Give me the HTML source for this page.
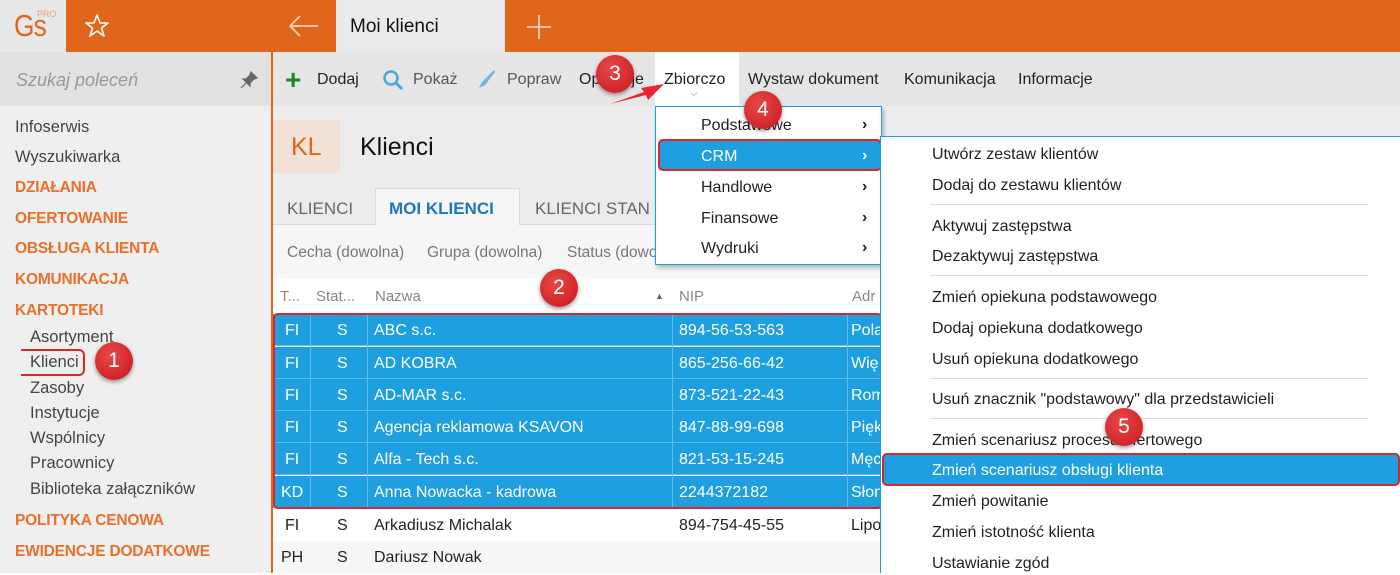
<!DOCTYPE html>
<html><head><meta charset="utf-8"><style>
*{margin:0;padding:0;box-sizing:border-box}
body{width:1400px;height:573px;overflow:hidden;position:relative;background:#fff;font-family:"Liberation Sans",sans-serif;color:#222}
.a{position:absolute;white-space:nowrap}
.side{font-size:16.5px;color:#444}
.cat{font-size:15.5px;color:#e8702a;font-weight:bold;letter-spacing:-0.2px}
.row{position:absolute;left:273px;width:608px;height:32px;font-size:16px;line-height:34px}
.sel{background:#1e9fdf;color:#fff;border-bottom:1px solid #5fbde9}
.row span{position:absolute}
.badge{position:absolute;width:38px;height:38px;border-radius:50%;background:radial-gradient(circle at 40% 35%,#e84848,#c8161c);color:#fff;font-size:21px;text-align:center;line-height:38px;box-shadow:0 2px 4px rgba(0,0,0,.4)}
.mi{position:absolute;left:932px;font-size:16px;color:#222}
.sep{position:absolute;left:930px;width:438px;height:1px;background:#ddd}
.dm{position:absolute;left:701px;font-size:16px;color:#222}
.chev{position:absolute;left:862px;font-size:16px;font-weight:bold}
</style></head><body>
<div class="a" style="left:0;top:0;width:1400px;height:52px;background:#e0661b"></div>
<div class="a" style="left:0;top:0;width:66px;height:52px;background:#e8e8e8"></div>
<div class="a" style="left:14px;top:8px;font-size:31px;color:#e0661b;letter-spacing:-1px;transform:scaleX(.85);transform-origin:left">Gs</div>
<div class="a" style="left:37px;top:9px;font-size:9px;color:#e8a37a">PRO</div>
<svg class="a" style="left:84px;top:13px" width="26" height="26" viewBox="0 0 26 26"><path d="M13 2 L16 10 L24 10 L17.5 15 L20 23 L13 18 L6 23 L8.5 15 L2 10 L10 10 Z" fill="none" stroke="#fff" stroke-width="1.6" stroke-linejoin="round"/></svg>
<svg class="a" style="left:288px;top:14px" width="32" height="24"><path d="M2 12 H30 M2 12 L12 2 M2 12 L12 22" stroke="#f6d2b8" stroke-width="1.8" fill="none"/></svg>
<div class="a" style="left:336px;top:0;width:169px;height:52px;background:#ebebeb"></div>
<div class="a" style="left:350px;top:16px;font-size:19px;color:#111">Moi klienci</div>
<svg class="a" style="left:526px;top:14px" width="26" height="26"><path d="M13 1 V25 M1 13 H25" stroke="#f6d2b8" stroke-width="1.8"/></svg>
<div class="a" style="left:0;top:52px;width:271px;height:521px;background:#efefef"></div>
<div class="a" style="left:0;top:52px;width:271px;height:54px;background:#e2e2e2"></div>
<div class="a" style="left:16px;top:70px;font-size:18px;color:#999;font-style:italic">Szukaj poleceń</div>
<svg class="a" style="left:240px;top:71px" width="18" height="18"><path d="M11 1 L17 7 L14 8 L10 12 L10 15 L3 8 L6 8 L10 4 Z M6 12 L1 17" fill="#666" stroke="#666" stroke-width="1.2"/></svg>
<div class="a" style="left:271px;top:52px;width:2px;height:521px;background:#e0661b"></div>
<div class="a side" style="left:15px;top:118px">Infoserwis</div>
<div class="a side" style="left:15px;top:148px">Wyszukiwarka</div>
<div class="a cat" style="left:15px;top:179px">DZIAŁANIA</div>
<div class="a cat" style="left:15px;top:210px">OFERTOWANIE</div>
<div class="a cat" style="left:15px;top:240px">OBSŁUGA KLIENTA</div>
<div class="a cat" style="left:15px;top:271px">KOMUNIKACJA</div>
<div class="a cat" style="left:15px;top:302px">KARTOTEKI</div>
<div class="a side" style="left:30px;top:328px">Asortyment</div>
<div class="a side" style="left:30px;top:353px">Klienci</div>
<div class="a" style="left:21px;top:349px;width:64px;height:27px;border:2px solid #d8262c;border-left:none;border-radius:0 6px 6px 0"></div>
<div class="a side" style="left:30px;top:379px">Zasoby</div>
<div class="a side" style="left:30px;top:404px">Instytucje</div>
<div class="a side" style="left:30px;top:429px">Wspólnicy</div>
<div class="a side" style="left:30px;top:454px">Pracownicy</div>
<div class="a side" style="left:30px;top:480px">Biblioteka załączników</div>
<div class="a cat" style="left:15px;top:512px">POLITYKA CENOWA</div>
<div class="a cat" style="left:15px;top:543px">EWIDENCJE DODATKOWE</div>
<div class="a" style="left:273px;top:52px;width:1127px;height:54px;background:#e6e6e6"></div>
<div class="a" style="left:655px;top:52px;width:84px;height:54px;background:#fff"></div>
<div class="a" style="left:285px;top:67px;font-size:28px;color:#1b8a1b;font-weight:bold;line-height:26px">+</div>
<div class="a" style="left:317px;top:71px;font-size:16px">Dodaj</div>
<svg class="a" style="left:382px;top:69px" width="22" height="22"><circle cx="9" cy="9" r="6.5" stroke="#4aa8dc" stroke-width="2.5" fill="none"/><path d="M14 14 L20 20" stroke="#4aa8dc" stroke-width="3"/></svg>
<div class="a" style="left:413px;top:71px;font-size:16px;color:#555">Pokaż</div>
<svg class="a" style="left:474px;top:68px" width="22" height="22"><path d="M20 2 L8 14 L5 20 L11 17 L21 4 Z" fill="#6db6e0"/></svg>
<div class="a" style="left:507px;top:71px;font-size:16px;color:#555">Popraw</div>
<div class="a" style="left:579px;top:71px;font-size:16px">Operacje</div>
<div class="a" style="left:664px;top:71px;font-size:16px">Zbiorczo</div>
<div class="a" style="left:690px;top:88px;font-size:10px;color:#888">⌵</div>
<div class="a" style="left:748px;top:71px;font-size:16px">Wystaw dokument</div>
<div class="a" style="left:904px;top:71px;font-size:16px">Komunikacja</div>
<div class="a" style="left:1018px;top:71px;font-size:16px">Informacje</div>
<svg class="a" style="left:608px;top:80px" width="60" height="28"><path d="M2 24 L36 12 L33 8 L56 4 L40 20 L38 15 Z" fill="#e8262c"/></svg>
<div class="a" style="left:273px;top:106px;width:1127px;height:172px;background:#ececec"></div>
<div class="a" style="left:273px;top:120px;width:67px;height:53px;background:#f2e1d6"></div>
<div class="a" style="left:291px;top:133px;font-size:25px;color:#e0661b">KL</div>
<div class="a" style="left:360px;top:133px;font-size:25px;color:#111">Klienci</div>
<div class="a" style="left:273px;top:224px;width:608px;height:1px;background:#d8d8d8"></div>
<div class="a" style="left:375px;top:188px;width:145px;height:38px;background:#f6f6f6;border:1px solid #d8d8d8;border-bottom:none"></div>
<div class="a" style="left:287px;top:199px;font-size:17px;color:#666">KLIENCI</div>
<div class="a" style="left:389px;top:199px;font-size:17px;color:#1a7ab8;font-weight:bold">MOI KLIENCI</div>
<div class="a" style="left:535px;top:199px;font-size:17px;color:#666">KLIENCI STAN</div>
<div class="a" style="left:273px;top:225px;width:608px;height:53px;background:#f6f6f6"></div>
<div class="a" style="left:287px;top:244px;font-size:15.5px;color:#777">Cecha (dowolna)</div>
<div class="a" style="left:427px;top:244px;font-size:15.5px;color:#777">Grupa (dowolna)</div>
<div class="a" style="left:567px;top:244px;font-size:15.5px;color:#777">Status (dowo</div>
<div class="a" style="left:273px;top:280px;width:608px;height:32px;background:#fff"></div>
<div class="a" style="left:280px;top:288px;font-size:15px;color:#888">T...</div>
<div class="a" style="left:316px;top:288px;font-size:15px;color:#888">Stat...</div>
<div class="a" style="left:375px;top:288px;font-size:15px;color:#888">Nazwa</div>
<div class="a" style="left:655px;top:291px;font-size:9px;color:#666">▲</div>
<div class="a" style="left:679px;top:288px;font-size:15px;color:#888">NIP</div>
<div class="a" style="left:852px;top:288px;font-size:15px;color:#888">Adr</div>
<div class="row sel" style="top:314px"><span style="left:12px">FI</span><span style="left:64px">S</span><span style="left:101px">ABC s.c.</span><span style="left:406px">894-56-53-563</span><span style="left:578px">Pola</span></div>
<div class="row sel" style="top:347px"><span style="left:12px">FI</span><span style="left:64px">S</span><span style="left:101px">AD KOBRA</span><span style="left:406px">865-256-66-42</span><span style="left:578px">Wię</span></div>
<div class="row sel" style="top:379px"><span style="left:12px">FI</span><span style="left:64px">S</span><span style="left:101px">AD-MAR s.c.</span><span style="left:406px">873-521-22-43</span><span style="left:578px">Rom</span></div>
<div class="row sel" style="top:411px"><span style="left:12px">FI</span><span style="left:64px">S</span><span style="left:101px">Agencja reklamowa KSAVON</span><span style="left:406px">847-88-99-698</span><span style="left:578px">Pięk</span></div>
<div class="row sel" style="top:443px"><span style="left:12px">FI</span><span style="left:64px">S</span><span style="left:101px">Alfa - Tech s.c.</span><span style="left:406px">821-53-15-245</span><span style="left:578px">Męc</span></div>
<div class="row sel" style="top:476px"><span style="left:8px">KD</span><span style="left:64px">S</span><span style="left:101px">Anna Nowacka - kadrowa</span><span style="left:406px">2244372182</span><span style="left:578px">Słon</span></div>
<div class="row" style="top:509px"><span style="left:12px">FI</span><span style="left:64px">S</span><span style="left:101px">Arkadiusz Michalak</span><span style="left:406px">894-754-45-55</span><span style="left:578px">Lipo</span></div>
<div class="row" style="top:541px;background:#f6f6f6"><span style="left:8px">PH</span><span style="left:64px">S</span><span style="left:101px">Dariusz Nowak</span></div>
<div class="a" style="left:310px;top:314px;width:1px;height:195px;background:#5fbde9"></div>
<div class="a" style="left:367px;top:314px;width:1px;height:195px;background:#5fbde9"></div>
<div class="a" style="left:672px;top:314px;width:1px;height:195px;background:#5fbde9"></div>
<div class="a" style="left:847px;top:314px;width:1px;height:195px;background:#5fbde9"></div>
<div class="a" style="left:273px;top:313px;width:610px;height:196px;border:2px solid #d8262c;border-radius:5px"></div>
<div class="a" style="left:655px;top:106px;width:227px;height:159px;background:#fff;border:1px solid #1a9bdb;box-shadow:2px 3px 4px rgba(0,0,0,.25)"></div>
<div class="dm" style="top:117px">Podstawowe</div><div class="chev" style="top:116px">›</div>
<div class="a" style="left:658px;top:139px;width:224px;height:32px;background:#1e9fdf;border:2px solid #d8262c;border-radius:5px"></div>
<div class="dm" style="top:148px;color:#fff">CRM</div><div class="chev" style="top:147px;color:#fff">›</div>
<div class="dm" style="top:179px">Handlowe</div><div class="chev" style="top:178px">›</div>
<div class="dm" style="top:210px">Finansowe</div><div class="chev" style="top:209px">›</div>
<div class="dm" style="top:240px">Wydruki</div><div class="chev" style="top:239px">›</div>
<div class="a" style="left:880px;top:136px;width:520px;height:437px;background:#fff;border:1px solid #1a9bdb;border-right:none;border-bottom:none"></div>
<div class="mi" style="top:146px">Utwórz zestaw klientów</div>
<div class="mi" style="top:177px">Dodaj do zestawu klientów</div>
<div class="sep" style="top:204px"></div>
<div class="mi" style="top:218px">Aktywuj zastępstwa</div>
<div class="mi" style="top:248px">Dezaktywuj zastępstwa</div>
<div class="sep" style="top:275px"></div>
<div class="mi" style="top:289px">Zmień opiekuna podstawowego</div>
<div class="mi" style="top:320px">Dodaj opiekuna dodatkowego</div>
<div class="mi" style="top:351px">Usuń opiekuna dodatkowego</div>
<div class="sep" style="top:378px"></div>
<div class="mi" style="top:391px">Usuń znacznik "podstawowy" dla przedstawicieli</div>
<div class="sep" style="top:418px"></div>
<div class="mi" style="top:432px">Zmień scenariusz procesu ofertowego</div>
<div class="a" style="left:882px;top:453px;width:518px;height:33px;background:#1e9fdf;border:2px solid #d8262c;border-radius:5px"></div>
<div class="mi" style="top:462px;color:#fff">Zmień scenariusz obsługi klienta</div>
<div class="mi" style="top:493px">Zmień powitanie</div>
<div class="mi" style="top:524px">Zmień istotność klienta</div>
<div class="mi" style="top:555px">Ustawianie zgód</div>
<div class="badge" style="left:95px;top:342px">1</div>
<div class="badge" style="left:540px;top:269px">2</div>
<div class="badge" style="left:596px;top:55px">3</div>
<div class="badge" style="left:744px;top:91px">4</div>
<div class="badge" style="left:1105px;top:408px">5</div>
</body></html>
